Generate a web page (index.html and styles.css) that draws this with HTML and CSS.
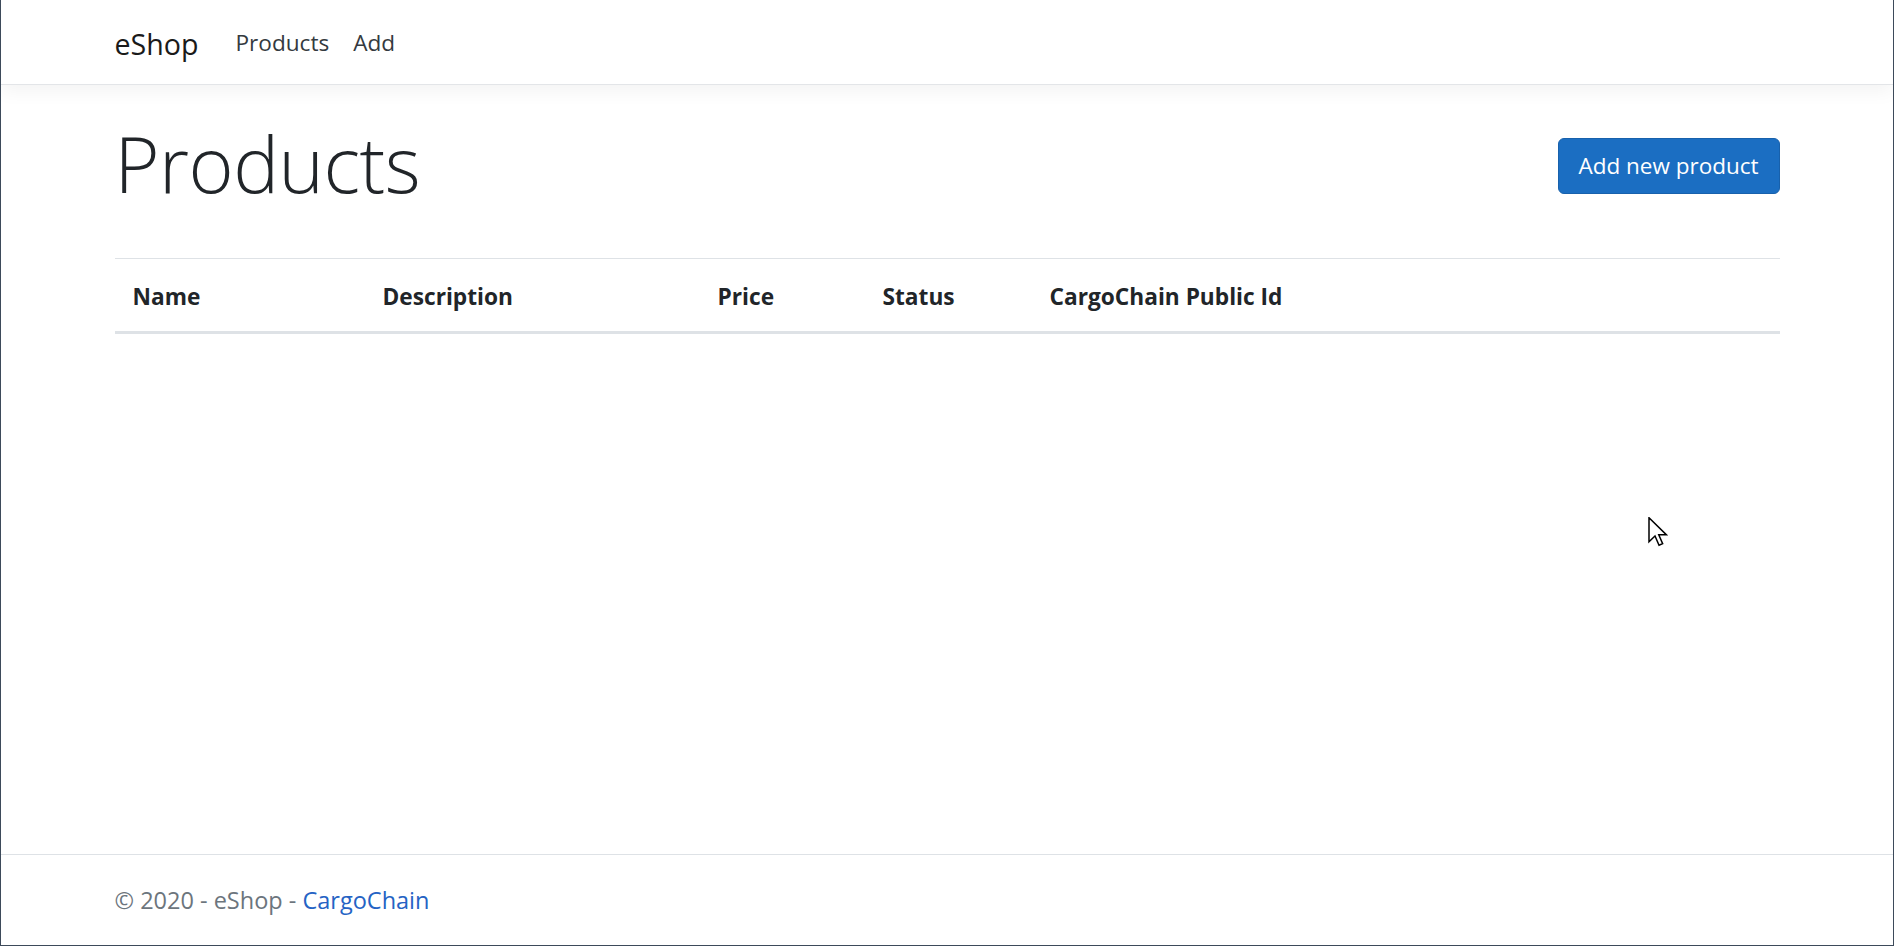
FILE: index.html
```html
<!DOCTYPE html>
<html lang="en">
<head>
<meta charset="utf-8">
<title>Products - eShop</title>
<link rel="stylesheet" href="styles.css">
</head>
<body>
<div class="window">
  <header class="navbar">
    <div class="container nav-inner">
      <a class="brand" href="#">eShop</a>
      <ul class="nav">
        <li><a class="nav-link" href="#">Products</a></li>
        <li><a class="nav-link" href="#">Add</a></li>
      </ul>
    </div>
  </header>
  <main class="container main">
    <div class="page-head">
      <h1 class="title">Products</h1>
      <a class="btn" href="#">Add new product</a>
    </div>
    <table class="table">
      <colgroup>
        <col class="c-name"><col class="c-desc"><col class="c-price"><col class="c-status"><col class="c-id">
      </colgroup>
      <thead>
        <tr>
          <th>Name</th>
          <th>Description</th>
          <th>Price</th>
          <th>Status</th>
          <th>CargoChain Public Id</th>
        </tr>
      </thead>
      <tbody></tbody>
    </table>
  </main>
  <footer class="footer">
    <div class="container">&copy; 2020 - eShop - <a class="footer-link" href="#">CargoChain</a></div>
  </footer>
  <svg class="cursor" width="20" height="30" viewBox="0 0 13 20">
    <polygon points="0.5,0.5 0.5,16.5 4.5,12.7 7.2,18.8 9.6,17.8 7,11.8 12,11.8" fill="#ffffff" stroke="#000000" stroke-width="1" stroke-linejoin="miter"/>
  </svg>
</div>
</body>
</html>
```

FILE: styles.css
```css
* { box-sizing: border-box; }

html, body {
  margin: 0;
  padding: 0;
  background: #ffffff;
}

body {
  font-family: "Open Sans", "Noto Sans", "Liberation Sans", sans-serif;
  font-size: 22.3px;
  line-height: 36px;
  color: #212529;
}

.window {
  position: relative;
  height: 946px;
  display: flex;
  flex-direction: column;
  border-left: 1px solid #3d4a5a;
  border-right: 1px solid #3d4a5a;
  border-bottom: 1px solid #3d4a5a;
  overflow: hidden;
}

.container {
  width: 1665px;
  margin: 0 auto;
}

.navbar {
  height: 85px;
  border-bottom: 1px solid #e3e5e8;
  box-shadow: 0 6px 18px rgba(0, 0, 0, 0.05);
  background: #ffffff;
  flex: none;
}

.nav-inner {
  height: 84px;
  display: flex;
  align-items: center;
  padding-top: 2px;
}

.brand {
  font-size: 28.6px;
  line-height: 45px;
  color: #1a1a1a;
  text-decoration: none;
  margin-right: 25px;
}

.nav {
  list-style: none;
  margin: 0;
  padding: 0;
  display: flex;
}

.nav-link {
  display: block;
  padding: 6px 12px;
  font-size: 22.6px;
  color: #343a40;
  text-decoration: none;
}

.main {
  padding-top: 24px;
  flex: none;
}

.page-head {
  display: flex;
  justify-content: space-between;
  align-items: center;
  margin-bottom: 36px;
}

.title {
  margin: 0 0 12px;
  padding: 4px 0 0;
  height: 101px;
  font-size: 77px;
  font-weight: 300;
  line-height: 101px;
  color: #212529;
  letter-spacing: -0.5px;
}

.btn {
  display: inline-block;
  padding: 9px 18px;
  width: 222px;
  text-align: center;
  background: #1b6ec2;
  border: 1px solid #1861ac;
  border-radius: 6px;
  color: #ffffff;
  text-decoration: none;
  font-size: 22.5px;
  line-height: 36px;
}

.table {
  width: 100%;
  border-collapse: collapse;
  table-layout: fixed;
}

.c-name { width: 250px; }
.c-desc { width: 335px; }
.c-price { width: 165px; }
.c-status { width: 167px; }

.table th {
  text-align: left;
  font-weight: 700;
  font-size: 22.7px;
  padding: 20px 18px 16px;
  line-height: 36px;
  border-top: 1px solid #dee2e6;
  border-bottom: 3px solid #dee2e6;
  color: #212529;
}

.footer {
  margin-top: auto;
  border-top: 1px solid #dee2e6;
  line-height: 90px;
  font-size: 23.5px;
  color: #6c757d;
  white-space: nowrap;
  flex: none;
}

.footer-link {
  color: #2563c4;
  text-decoration: none;
}

.cursor {
  position: absolute;
  left: 1647px;
  top: 517px;
}
```
